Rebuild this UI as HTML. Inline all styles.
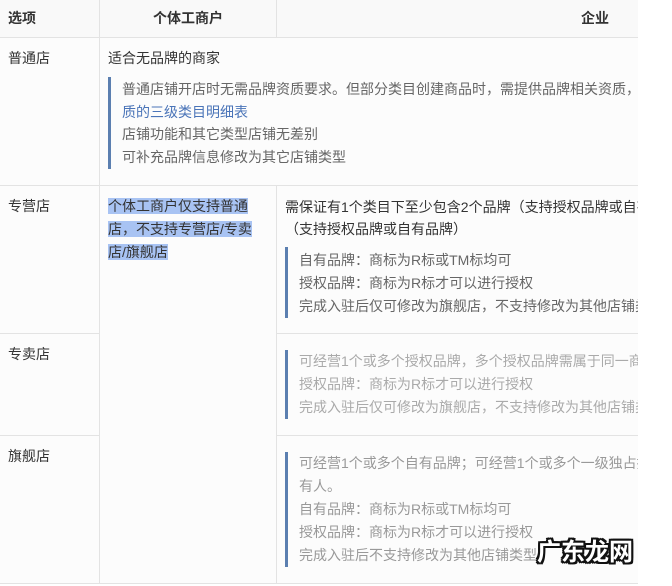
<!DOCTYPE html>
<html><head><meta charset="utf-8"><style>
*{margin:0;padding:0;box-sizing:border-box}
body{width:672px;height:586px;background:#fff;position:relative;overflow:hidden;font-family:"Liberation Sans","Noto Sans CJK SC",sans-serif;font-size:14px;color:#333}
.t{position:absolute;white-space:nowrap;line-height:22px}
.h{position:absolute;background:#e3e3e3}
.v{position:absolute;background:#e3e3e3;width:1px}
.bq{position:absolute;width:3px;background:#5b7fb0}
.g{color:#666}.l{color:#aaa}.m{color:#999}
</style></head><body>
<div style="position:absolute;left:0;top:0;width:638px;height:584px;background:#fcfcfc"></div>
<div style="position:absolute;left:0;top:0;width:638px;height:37px;background:#f9f9f9"></div>
<div class="h" style="left:0;top:37px;width:638px;height:1px"></div>
<div class="h" style="left:0;top:185px;width:638px;height:1px"></div>
<div class="h" style="left:0;top:333px;width:99px;height:1px"></div>
<div class="h" style="left:276px;top:333px;width:362px;height:1px"></div>
<div class="h" style="left:0;top:435px;width:99px;height:1px"></div>
<div class="h" style="left:276px;top:435px;width:362px;height:1px"></div>
<div class="h" style="left:0;top:583px;width:638px;height:1px"></div>
<div class="v" style="left:99px;top:0;height:584px"></div>
<div class="v" style="left:276px;top:0;height:37px"></div>
<div class="v" style="left:276px;top:185px;height:399px"></div>

<div class="t" style="left:8px;top:7px;font-weight:bold">选项</div>
<div class="t" style="left:153px;top:7px;font-weight:bold">个体工商户</div>
<div class="t" style="left:581px;top:7px;font-weight:bold">企业</div>

<div class="t" style="left:8px;top:47px">普通店</div>
<div class="t" style="left:108px;top:47px">适合无品牌的商家</div>
<div class="bq" style="left:108px;top:77px;height:92px"></div>
<div class="t g" style="left:122px;top:78px">普通店铺开店时无需品牌资质要求。但部分类目创建商品时，需提供品牌相关资质，</div>
<div class="t" style="left:122px;top:101px;color:#4a74b8">质的三级类目明细表</div>
<div class="t g" style="left:122px;top:123px">店铺功能和其它类型店铺无差别</div>
<div class="t g" style="left:122px;top:146px">可补充品牌信息修改为其它店铺类型</div>

<div class="t" style="left:8px;top:195px">专营店</div>
<div style="position:absolute;left:108px;top:195px;width:154px;line-height:23px">
<span style="background:#a8c3f3">个体工商户仅支持普通店，不支持专营店/专卖店/旗舰店</span></div>
<div class="t" style="left:285px;top:196px">需保证有1个类目下至少包含2个品牌（支持授权品牌或自有品牌</div>
<div class="t" style="left:285px;top:218px">（支持授权品牌或自有品牌）</div>
<div class="bq" style="left:285px;top:247px;height:71px"></div>
<div class="t g" style="left:299px;top:249px">自有品牌：商标为R标或TM标均可</div>
<div class="t g" style="left:299px;top:272px">授权品牌：商标为R标才可以进行授权</div>
<div class="t g" style="left:299px;top:295px">完成入驻后仅可修改为旗舰店，不支持修改为其他店铺类型</div>

<div class="t" style="left:8px;top:343px">专卖店</div>
<div class="bq" style="left:285px;top:350px;height:69px"></div>
<div class="t l" style="left:299px;top:350px">可经营1个或多个授权品牌，多个授权品牌需属于同一商标权人</div>
<div class="t l" style="left:299px;top:373px">授权品牌：商标为R标才可以进行授权</div>
<div class="t l" style="left:299px;top:396px">完成入驻后仅可修改为旗舰店，不支持修改为其他店铺类型</div>

<div class="t" style="left:8px;top:445px">旗舰店</div>
<div class="bq" style="left:285px;top:452px;height:115px"></div>
<div class="t m" style="left:299px;top:452px">可经营1个或多个自有品牌；可经营1个或多个一级独占授权品牌</div>
<div class="t m" style="left:299px;top:475px">有人。</div>
<div class="t m" style="left:299px;top:498px">自有品牌：商标为R标或TM标均可</div>
<div class="t m" style="left:299px;top:521px">授权品牌：商标为R标才可以进行授权</div>
<div class="t m" style="left:299px;top:544px">完成入驻后不支持修改为其他店铺类型</div>

<div style="position:absolute;left:638px;top:0;width:34px;height:586px;background:#fff"></div>
<div class="t" style="left:537px;top:538px;font-size:24px;line-height:30px;font-weight:bold;color:#fff;text-shadow:-2px -2px 0 #111,2px -2px 0 #111,-2px 2px 0 #111,2px 2px 0 #111,0 -2px 0 #111,0 2px 0 #111,-2px 0 0 #111,2px 0 0 #111">广东龙网</div>
</body></html>
